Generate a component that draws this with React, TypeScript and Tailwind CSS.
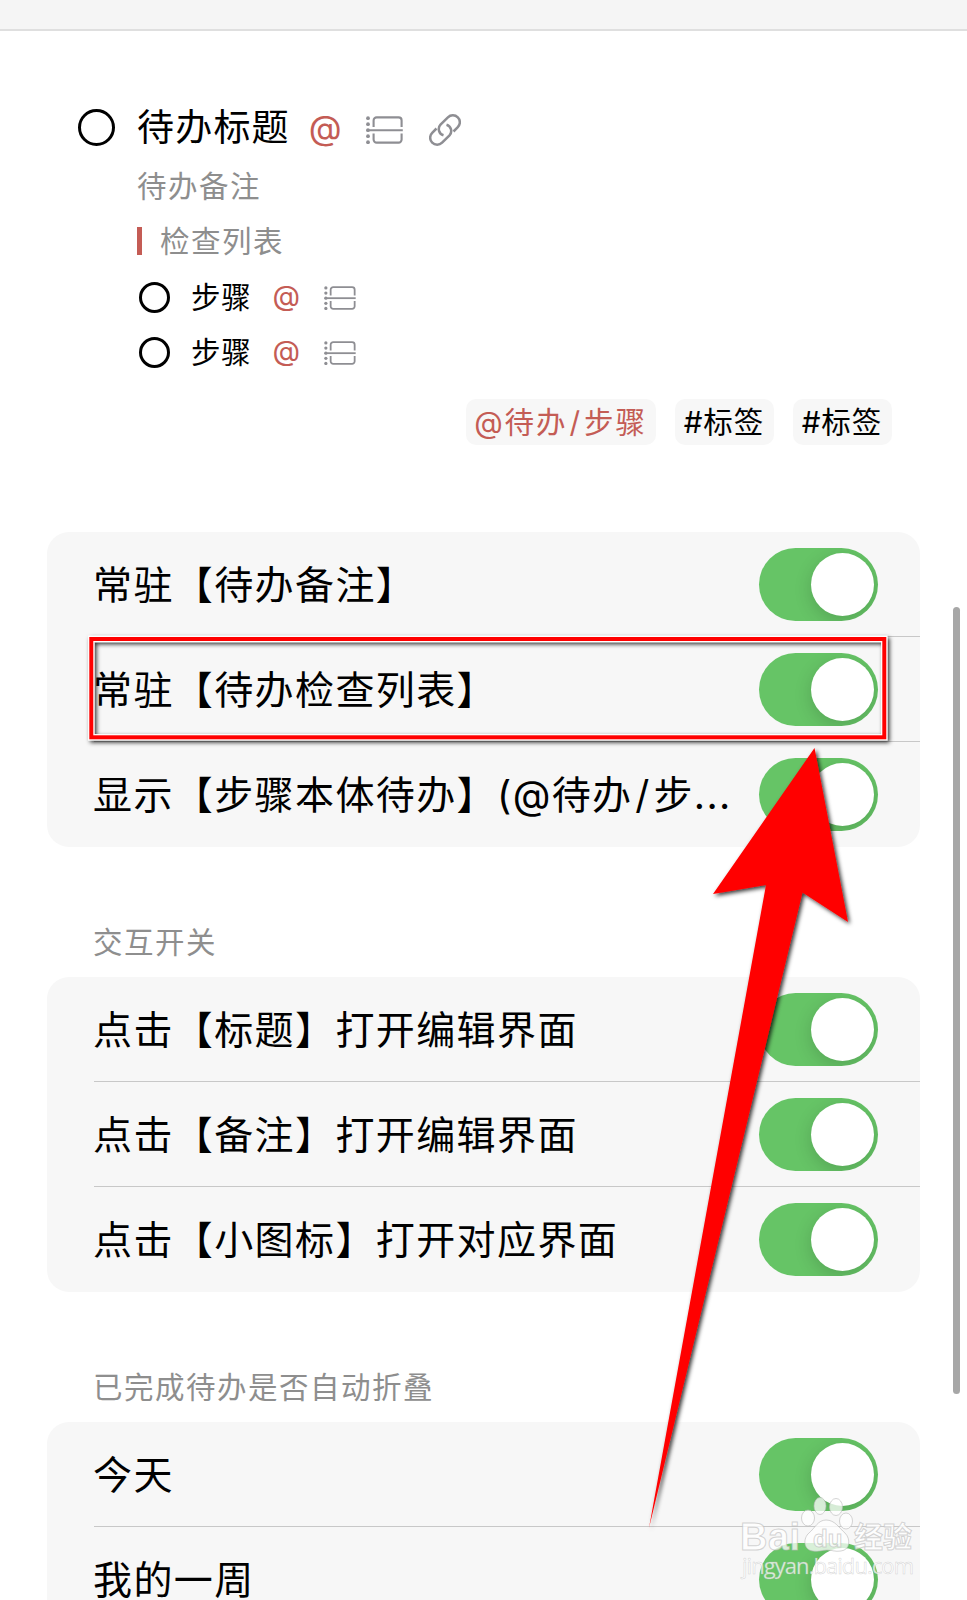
import type { ReactNode } from "react"

const FONT = "font-[Inter,'Noto_Sans_CJK_SC',sans-serif]"

function CheckIcon({ className }: { className: string }) {
  return (
    <svg className={className} viewBox="0 0 37 28" fill="none" stroke="#8e8e93" strokeWidth="2.1">
      <path d="M7.6 11V4.4a3 3 0 0 1 3-3h22a3 3 0 0 1 3 3V11" />
      <path d="M7.6 17.4v6.2a3 3 0 0 0 3 3h22a3 3 0 0 0 3-3v-6.2" />
      <path d="M0.6 14.2h36.2" />
      <g fill="#8e8e93" stroke="none">
        <circle cx="2" cy="2.2" r="1.9" />
        <circle cx="2" cy="8.2" r="1.9" />
        <circle cx="2" cy="14.2" r="1.9" />
        <circle cx="2" cy="20.2" r="1.9" />
        <circle cx="2" cy="26.2" r="1.9" />
      </g>
    </svg>
  )
}

function LinkIcon() {
  return (
    <svg className="h-8 w-8" viewBox="0 0 32 32" fill="none" stroke="#8e8e93" strokeWidth="2.5">
      <path d="M24.5 17.5L28.8 13.2A7 7 0 0 0 18.9 3.3L11.5 10.7A6.5 6.5 0 0 0 14.5 21.3" />
      <path d="M7.5 14.5L3.2 18.8A7 7 0 0 0 13.1 28.7L20.5 21.3A6.5 6.5 0 0 0 17.5 10.7" />
    </svg>
  )
}

function Toggle() {
  return (
    <div className="flex h-[73px] w-[119px] shrink-0 items-center justify-end overflow-hidden rounded-full bg-[#66c466] pr-[4px]">
      <div className="h-[63px] w-[63px] rounded-full bg-white shadow-[0_5px_18px_rgba(0,0,0,0.16)]" />
    </div>
  )
}

function Label({ text }: { text: string }) {
  const [before, after] = text.split("/")
  if (after === undefined) return <>{text}</>
  return (
    <>
      {before}
      <span className="mx-[0.07em]">/</span>
      {after}
    </>
  )
}

function Card({ rows }: { rows: string[] }) {
  return (
    <div className="ml-[47px] w-[873px] rounded-[22px] bg-[#f7f7f7] pl-[47px]">
      {rows.map((row, i) => (
        <div
          key={row}
          className={`flex h-[105px] items-center justify-between pr-[42px] ${i > 0 ? "shadow-[0_-1px_0_#c8c8c8]" : ""}`}
        >
          <span className="-ml-px whitespace-pre text-[39px] leading-[50px] tracking-[1.4px] text-black">
            <Label text={row} />
          </span>
          <Toggle />
        </div>
      ))}
    </div>
  )
}

function SectionTitle({ children }: { children: ReactNode }) {
  return (
    <div className="flex h-[130px] items-end pb-[15px] pl-[93px]">
      <span className="text-[29.5px] leading-[40px] tracking-[1.5px] text-[#8e8e8e]">{children}</span>
    </div>
  )
}

function Step() {
  return (
    <div className="flex h-[55px] items-center pl-[2px]">
      <span className="h-[31px] w-[31px] rounded-full border-[3px] border-black" />
      <span className="ml-[21px] pb-[2px] text-[29.5px] leading-[40px] tracking-[0.8px] text-black">步骤</span>
      <span className="ml-[21px] w-[28px] pb-[3px] text-[28.5px] leading-[40px] text-[#c45c55]">@</span>
      <CheckIcon className="ml-[23px] h-[24px] w-[32px]" />
    </div>
  )
}

function Tag({ children, className }: { children: ReactNode; className: string }) {
  return (
    <span
      className={`flex h-[46px] items-center justify-center rounded-[10px] bg-[#f7f7f7] text-[29.5px] leading-[40px] ${className}`}
    >
      <span className="-ml-px pb-px">{children}</span>
    </span>
  )
}

function Watermark() {
  return (
    <svg className="absolute left-[736px] top-[1490px] h-[96px] w-[190px]" viewBox="0 0 190 96">
      <g
        fill="#ffffff"
        fillOpacity="0.75"
        stroke="#b8b8b8"
        strokeOpacity="0.6"
        strokeWidth="1"
        fontFamily="Liberation Sans, Noto Sans CJK SC, sans-serif"
      >
        <ellipse cx="72" cy="28" rx="6.5" ry="8" />
        <ellipse cx="84" cy="16" rx="6" ry="8.5" />
        <ellipse cx="100" cy="17" rx="6.5" ry="8.5" />
        <ellipse cx="110" cy="31" rx="6.5" ry="8" />
        <path d="M90 30c-8 0-11 8-17 13-6 5-6 17 4 18 6 1 9-1 14-1s8 2 14 1c9-1 10-12 4-18-6-5-10-13-19-13z" />
        <text x="4" y="60" fontSize="38" fontWeight="bold" textLength="60">Bai</text>
        <text x="77" y="57" fontSize="24" fontWeight="bold">du</text>
        <text x="118" y="58" fontSize="29" fontWeight="bold">经验</text>
        <text x="6" y="84" fontSize="22" textLength="172" strokeWidth="0.5" fontFamily="Open Sans, sans-serif">jingyan.baidu.com</text>
      </g>
    </svg>
  )
}

export default function App() {
  return (
    <div className={`relative h-[1600px] w-[967px] overflow-hidden bg-white ${FONT}`}>
      <div className="h-[31px] border-b-2 border-[#dfdfdf] bg-[#f5f5f5]" />

      <div className="h-[501px] pt-[62px]">
        <div className="flex h-[68px] items-center pl-[78px]">
          <span className="h-[37px] w-[37px] rounded-full border-[3.5px] border-black" />
          <span className="ml-[22px] pt-[2px] text-[37px] leading-[50px] tracking-[1.2px] text-black">待办标题</span>
          <span className="ml-[19px] w-[34px] pt-px text-[34px] leading-[46px] text-[#c45c55]">@</span>
          <CheckIcon className="ml-[23px] mt-[5px] h-[28px] w-[37px]" />
          <span className="ml-[26px] mt-[5px]">
            <LinkIcon />
          </span>
        </div>
        <div className="pl-[137px]">
          <div className="flex h-[50px] items-center text-[29.5px] tracking-[1.5px] text-[#8e8e8e]">待办备注</div>
          <div className="flex h-[59px] items-center text-[29.5px] tracking-[1.5px] text-[#8e8e8e]">
            <span className="mr-[18px] h-[28px] w-[5px] bg-[#c45c55]" />
            <span className="pt-px">检查列表</span>
          </div>
          <Step />
          <Step />
        </div>
        <div className="mt-[19px] flex justify-end gap-[19px] pr-[75px]">
          <Tag className="w-[190px] tracking-[1.9px] text-[#c45c55]">
            <Label text="@待办/步骤" />
          </Tag>
          <Tag className="w-[99px] tracking-[1px] text-black">#标签</Tag>
          <Tag className="w-[99px] tracking-[1px] text-black">#标签</Tag>
        </div>
      </div>

      <Card rows={["常驻【待办备注】", "常驻【待办检查列表】", "显示【步骤本体待办】(@待办/步..."]} />
      <SectionTitle>交互开关</SectionTitle>
      <Card rows={["点击【标题】打开编辑界面", "点击【备注】打开编辑界面", "点击【小图标】打开对应界面"]} />
      <SectionTitle>已完成待办是否自动折叠</SectionTitle>
      <Card rows={["今天", "我的一周"]} />

      <div className="absolute left-[953px] top-[607px] h-[787px] w-[7px] rounded-full bg-[#a7a7a7]" />

      {/* highlighted row */}
      <svg className="absolute left-0 top-0 h-[1600px] w-[967px]" viewBox="0 0 967 1600">
        <defs>
          <filter id="shadow" x="-10%" y="-10%" width="120%" height="120%">
            <feDropShadow dx="2" dy="2" stdDeviation="2" floodColor="#000" floodOpacity="0.8" />
          </filter>
        </defs>
        <g filter="url(#shadow)">
          <rect x="91.3" y="639" width="793" height="98.3" fill="none" stroke="#fff" strokeWidth="6.4" />
          <rect x="91.3" y="639" width="793" height="98.3" fill="none" stroke="#f00" strokeWidth="4" />
        </g>
        <path
          d="M814.5 748L848 922L802.5 892.5L649 1528L766 885L713 894Z"
          fill="#f00"
          filter="url(#shadow)"
        />
      </svg>

      <Watermark />
    </div>
  )
}
